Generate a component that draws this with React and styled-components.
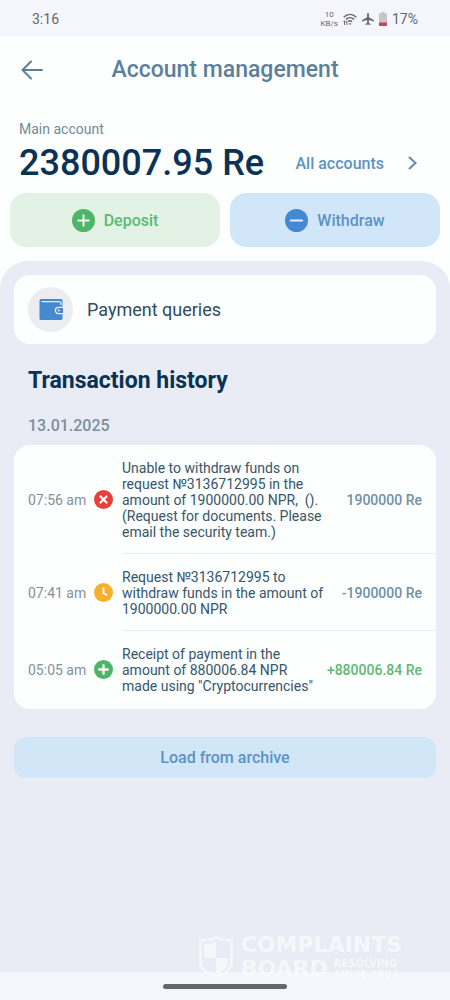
import React from "react";
import styled, { createGlobalStyle } from "styled-components";

const GlobalStyle = createGlobalStyle`
  * {
    box-sizing: border-box;
  }

  body {
    margin: 0;
    background: #fdfefe;
    font-family: Roboto, "Liberation Sans", sans-serif;
  }

  button {
    border: none;
    padding: 0;
    font-family: inherit;
    cursor: pointer;
  }

  svg {
    display: block;
    flex-shrink: 0;
  }
`;

const Screen = styled.div`
  display: flex;
  flex-direction: column;
  min-height: 100vh;
`;

/* Phone status bar */
const StatusBar = styled.div`
  display: flex;
  align-items: center;
  justify-content: space-between;
  height: 36px;
  padding: 2px 32px 0;
  background: #f5f6fb;
  color: #66676b;
  font-size: 14px;
`;

const StatusIcons = styled.div`
  display: flex;
  align-items: center;
  gap: 5px;
`;

const NetSpeed = styled.span`
  font-size: 8px;
  line-height: 9px;
  text-align: center;
`;

const Header = styled.header`
  display: grid;
  grid-template-columns: 32px 1fr 32px;
  align-items: center;
  height: 68px;
  padding: 0 16px;
`;

const BackButton = styled.button`
  display: flex;
  align-items: center;
  justify-content: center;
  height: 32px;
  background: none;
  color: #587f9b;
`;

const Title = styled.h1`
  margin: 0;
  text-align: center;
  color: #5b809b;
  font-size: 23px;
  line-height: 30px;
  font-weight: 500;
`;

const Account = styled.section`
  padding: 16px 19px 0;
`;

const AccountLabel = styled.div`
  color: #6e8b9d;
  font-size: 14px;
  line-height: 18px;
`;

const BalanceRow = styled.div`
  display: flex;
  align-items: center;
  justify-content: space-between;
  height: 50px;
`;

const Balance = styled.div`
  display: flex;
  gap: 9px;
  color: #0a3256;
  font-size: 36px;
  line-height: 40px;
  font-weight: 500;
`;

const AllAccounts = styled.a`
  display: flex;
  align-items: center;
  gap: 24px;
  padding-right: 14px;
  color: #5b93c4;
  font-size: 16px;
  font-weight: 500;
  text-decoration: none;
`;

const Actions = styled.div`
  display: grid;
  grid-template-columns: 1fr 1fr;
  gap: 10px;
  padding: 5px 10px 14px;
`;

const ActionButton = styled.button`
  display: flex;
  align-items: center;
  justify-content: center;
  gap: 9px;
  height: 54px;
  border-radius: 16px;
  background: ${({ $tone }) => ($tone === "green" ? "#e2f3e6" : "#d1e6f8")};
  color: ${({ $tone }) => ($tone === "green" ? "#5cb973" : "#5b93c8")};
  font-size: 16px;
  font-weight: 500;
`;

const Panel = styled.main`
  flex: 1;
  padding: 14px 14px 0;
  border-radius: 28px 28px 0 0;
  background: #e9ecf5;
`;

const QueriesButton = styled.button`
  display: flex;
  align-items: center;
  gap: 14px;
  width: 100%;
  height: 69px;
  padding: 0 14px;
  border-radius: 16px;
  background: #fdfefe;
  color: #2b4d66;
  font-size: 18px;
`;

const IconCircle = styled.span`
  display: flex;
  align-items: center;
  justify-content: center;
  width: 45px;
  height: 45px;
  border-radius: 50%;
  background: #ecedf1;
`;

const SectionTitle = styled.h2`
  margin: 24px 14px 0;
  color: #0a3256;
  font-size: 23px;
  line-height: 26px;
  font-weight: 700;
`;

const DateLabel = styled.h3`
  margin: 22px 14px 9px;
  color: #7b909e;
  font-size: 16px;
  line-height: 20px;
  font-weight: 500;
`;

const TransactionList = styled.ul`
  margin: 0;
  padding: 0 0 1px 14px;
  border-radius: 16px;
  background: #fdfefe;
  list-style: none;
`;

const Transaction = styled.li`
  display: grid;
  grid-template-columns: 66px 20px 1fr;
  align-items: center;
`;

const Time = styled.time`
  color: #84929b;
  font-size: 14px;
`;

const Details = styled.div`
  display: flex;
  align-items: center;
  justify-content: space-between;
  gap: 4px;
  margin-left: 8px;
  padding: 15px 14px 13px 0;
  border-bottom: 1px solid ${({ $last }) => ($last ? "transparent" : "#e9ebee")};
`;

const Description = styled.p`
  flex: 1;
  max-width: 205px;
  margin: 0;
  color: #35566c;
  font-size: 14px;
  line-height: 16px;
  white-space: pre-line;
`;

const Amount = styled.span`
  color: ${({ $positive }) => ($positive ? "#5cb973" : "#6f90a6")};
  font-size: 14px;
  font-weight: 500;
  white-space: nowrap;
`;

const ArchiveButton = styled.button`
  width: 100%;
  height: 41px;
  margin-top: 28px;
  border-radius: 12px;
  background: #d1e6f7;
  color: #5b93c4;
  font-size: 16px;
  font-weight: 500;
`;

/* Bottom edge: watermark over the navigation bar */
const Footer = styled.footer`
  position: relative;
  display: flex;
  justify-content: center;
  height: 28px;
  padding-top: 12px;
  background: #f5f6fb;
`;

const HomeIndicator = styled.div`
  width: 124px;
  height: 5px;
  border-radius: 3px;
  background: #66676b;
`;

const Watermark = styled.div`
  position: absolute;
  right: 48px;
  bottom: 19px;
  display: flex;
  align-items: center;
  gap: 8px;
  color: #f9fbfd;
  opacity: 0.8;
  font-family: "DejaVu Sans", sans-serif;
  font-weight: 700;
`;

const WatermarkName = styled.div`
  font-size: 22px;
  line-height: 24px;
`;

const WatermarkSecondLine = styled.div`
  display: flex;
  align-items: center;
  gap: 6px;
`;

const WatermarkTagline = styled.div`
  font-size: 10px;
  line-height: 11px;
`;

const ArrowLeftIcon = () => (
  <svg width="22" height="20" viewBox="0 0 22 20" fill="none" stroke="currentColor" strokeWidth="2">
    <path d="M10 1.500 1.500 10l8.500 8.500M1.500 10H21" strokeLinecap="round" strokeLinejoin="round" />
  </svg>
);

const ChevronIcon = () => (
  <svg width="9" height="14" viewBox="0 0 9 14" fill="none" stroke="#6489a8" strokeWidth="2">
    <path d="M1 1l6.500 6L1 13" />
  </svg>
);

const WifiIcon = () => (
  <svg width="14" height="13" viewBox="0 0 14 13" fill="none" stroke="currentColor" strokeWidth="1.400">
    <path d="M.700 4.200C4.400.400 9.600.400 13.300 4.200M2.800 6.500c2.500-2.500 5.900-2.500 8.400 0M5 8.700c1.300-1.200 2.700-1.200 4 0" />
    <path d="M7 12.200 5.600 10.300h2.800z" fill="currentColor" stroke="none" />
    <path d="M1.500 12V8M.500 9 1.500 7.800 2.500 9M3.800 8v4" strokeWidth="1" />
  </svg>
);

const PlaneIcon = () => (
  <svg width="12" height="12" viewBox="0 0 12 12" fill="currentColor">
    <path d="M6 0c.600 0 .900.500.900 1.100v3.100L12 7.300v1.300L6.900 7.100v2.800l1.500 1.100v1L6 11.400 3.600 12v-1l1.500-1.100V7.100L0 8.600V7.300l5.100-3.100V1.100C5.100.500 5.400 0 6 0z" />
  </svg>
);

const BatteryIcon = () => (
  <svg width="8" height="14" viewBox="0 0 8 14">
    <path d="M2.500 0h3v1.200H7c.600 0 1 .400 1 1V11H0V2.200c0-.600.400-1 1-1h1.500z" fill="#c6c6cb" />
    <path d="M0 10.500h8V13c0 .600-.400 1-1 1H1c-.600 0-1-.400-1-1z" fill="#c74453" />
  </svg>
);

const PlusIcon = ({ size, bar = 2 }) => (
  <svg width={size} height={size} viewBox="0 0 24 24">
    <circle cx="12" cy="12" r="12" fill="#4cb566" />
    <path d="M12 6.500v11M6.500 12h11" stroke="#f3fbf5" strokeWidth={bar} strokeLinecap="round" />
  </svg>
);

const MinusIcon = () => (
  <svg width="23" height="23" viewBox="0 0 24 24">
    <circle cx="12" cy="12" r="12" fill="#4489d2" />
    <path d="M6 12h12" stroke="#e6f1fb" strokeWidth="2" strokeLinecap="round" />
  </svg>
);

const CrossIcon = () => (
  <svg width="19" height="19" viewBox="0 0 19 19">
    <circle cx="9.500" cy="9.500" r="9.500" fill="#e5403a" />
    <path d="m6.500 6.500 6 6m0-6-6 6" stroke="#fff" strokeWidth="2.200" strokeLinecap="round" />
  </svg>
);

const ClockIcon = () => (
  <svg width="19" height="19" viewBox="0 0 19 19">
    <circle cx="9.500" cy="9.500" r="9.500" fill="#f6b02c" />
    <path d="M9.500 5v5l3 2" fill="none" stroke="#fff" strokeWidth="1.800" strokeLinecap="round" />
  </svg>
);

const WalletIcon = () => (
  <svg width="24" height="21" viewBox="0 0 24 21">
    <path d="M2 0h20a1.500 1.500 0 0 1 1.500 1.500v18A1.500 1.500 0 0 1 22 21H2a1.500 1.500 0 0 1-1.500-1.500v-18A1.500 1.500 0 0 1 2 0z" fill="#458ace" />
    <path d="M2.500 2.600H20a2 2 0 0 1 2 2V6" fill="none" stroke="#e3eef9" strokeWidth="1.200" />
    <path d="M24 8.400h-4.500a3.100 3.100 0 0 0 0 6.200H24" fill="#458ace" stroke="#e3eef9" strokeWidth="1.300" />
    <circle cx="19.800" cy="11.500" r="1" fill="#e3eef9" />
  </svg>
);

const ShieldIcon = () => (
  <svg width="34" height="42" viewBox="0 0 34 42">
    <path d="M17 1.500c5 2.500 10 3 15.500 3V26c0 8-7 12-15.500 14.500C8.500 38 1.500 34 1.500 26V4.500C7 4.500 12 4 17 1.500z" fill="none" stroke="currentColor" strokeWidth="2.500" />
    <path d="M17 6v16H5V8c4.500 0 8.500-.500 12-2zM17 22h12v4c0 6-5 9-12 11z" fill="currentColor" />
  </svg>
);

const transactions = [
  {
    time: "07:56 am",
    icon: <CrossIcon />,
    text: "Unable to withdraw funds on request №3136712995 in the amount of 1900000.00 NPR,\u00a0 ().\n(Request for documents. Please email the security team.)",
    amount: "1900000 Re",
  },
  {
    time: "07:41 am",
    icon: <ClockIcon />,
    text: "Request №3136712995 to withdraw funds in the amount of 1900000.00 NPR",
    amount: "-1900000 Re",
  },
  {
    time: "05:05 am",
    icon: <PlusIcon size={19} bar={3} />,
    text: 'Receipt of payment in the amount of 880006.84 NPR made using "Cryptocurrencies"',
    amount: "+880006.84 Re",
    positive: true,
  },
];

const App = () => (
  <>
    <GlobalStyle />
    <Screen>
      <StatusBar>
        <span>3:16</span>
        <StatusIcons>
          <NetSpeed>
            10
            <br />
            KB/s
          </NetSpeed>
          <WifiIcon />
          <PlaneIcon />
          <BatteryIcon />
          <span>17%</span>
        </StatusIcons>
      </StatusBar>

      <Header>
        <BackButton type="button" aria-label="Back">
          <ArrowLeftIcon />
        </BackButton>
        <Title>Account management</Title>
      </Header>

      <Account>
        <AccountLabel>Main account</AccountLabel>
        <BalanceRow>
          <Balance>
            <span>2380007.95</span>
            <span>Re</span>
          </Balance>
          <AllAccounts href="#accounts">
            All accounts
            <ChevronIcon />
          </AllAccounts>
        </BalanceRow>
      </Account>

      <Actions>
        <ActionButton type="button" $tone="green">
          <PlusIcon size={23} />
          Deposit
        </ActionButton>
        <ActionButton type="button" $tone="blue">
          <MinusIcon />
          Withdraw
        </ActionButton>
      </Actions>

      <Panel>
        <QueriesButton type="button">
          <IconCircle>
            <WalletIcon />
          </IconCircle>
          Payment queries
        </QueriesButton>

        <SectionTitle>Transaction history</SectionTitle>
        <DateLabel>13.01.2025</DateLabel>

        <TransactionList>
          {transactions.map((item, index) => (
            <Transaction key={item.time}>
              <Time>{item.time}</Time>
              {item.icon}
              <Details $last={index === transactions.length - 1}>
                <Description>{item.text}</Description>
                <Amount $positive={item.positive}>{item.amount}</Amount>
              </Details>
            </Transaction>
          ))}
        </TransactionList>

        <ArchiveButton type="button">Load from archive</ArchiveButton>
      </Panel>

      <Footer>
        <Watermark>
          <ShieldIcon />
          <WatermarkName>
            COMPLAINTS
            <WatermarkSecondLine>
              BOARD
              <WatermarkTagline>
                RESOLVING
                <br />
                SINCE 2004
              </WatermarkTagline>
            </WatermarkSecondLine>
          </WatermarkName>
        </Watermark>
        <HomeIndicator />
      </Footer>
    </Screen>
  </>
);

export default App;
